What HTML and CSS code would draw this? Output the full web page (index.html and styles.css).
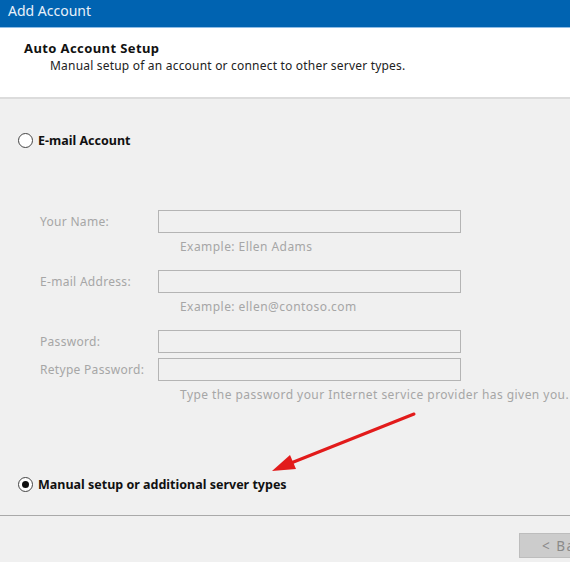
FILE: index.html
```html
<!DOCTYPE html>
<html>
<head>
<meta charset="utf-8">
<link rel="stylesheet" href="styles.css">
</head>
<body>
<div class="window">
  <div class="titlebar">Add Account</div>
  <div class="header">
    <div class="h-title">Auto Account Setup</div>
    <div class="h-sub">Manual setup of an account or connect to other server types.</div>
  </div>
  <div class="content">
    <div class="radio-row first">
      <span class="radio"></span>
      <span class="radio-label">E-mail Account</span>
    </div>
    <div class="form">
      <div class="label">Your Name:</div>
      <div class="field"></div>
      <div class="hint">Example: Ellen Adams</div>
      <div class="label">E-mail Address:</div>
      <div class="field"></div>
      <div class="hint">Example: ellen@contoso.com</div>
      <div class="label pw">Password:</div>
      <div class="field pw"></div>
      <div class="label retype">Retype Password:</div>
      <div class="field retype"></div>
      <div class="hint wide">Type the password your Internet service provider has given you.</div>
    </div>
    <div class="radio-row second">
      <span class="radio checked"></span>
      <span class="radio-label">Manual setup or additional server types</span>
    </div>
  </div>
  <div class="footer">
    <button class="btn">&lt; Back</button>
  </div>
  <svg class="arrow" width="570" height="562" viewBox="0 0 570 562">
    <line x1="414" y1="414" x2="286" y2="465" stroke="#e21b1b" stroke-width="3" stroke-linecap="round"/>
    <polygon points="272,471 290,455 296,469" fill="#e21b1b"/>
  </svg>
</div>
</body>
</html>
```

FILE: styles.css
```css
html, body {
  margin: 0;
  padding: 0;
}
body {
  width: 570px;
  height: 562px;
  overflow: hidden;
  background: #f0f0f0;
  font-family: "Noto Sans", "Open Sans", sans-serif;
  font-size: 12px;
  color: #1a1a1a;
}
.window {
  position: relative;
  width: 570px;
  height: 562px;
  overflow: hidden;
}
.titlebar {
  background: #0063b1;
  color: #e8f1fa;
  font-size: 14px;
  line-height: 21px;
  padding-left: 8px;
  border-bottom: 1px solid #8fbde6;
  box-sizing: border-box;
  height: 28px;
}
.header {
  background: #ffffff;
  border-bottom: 2px solid #dcdcdc;
  padding-left: 24px;
  padding-top: 11px;
  box-sizing: border-box;
  height: 71px;
}
.h-title {
  font-weight: bold;
  font-size: 13px;
  line-height: 18px;
  color: #111;
  letter-spacing: 0.4px;
}
.h-sub {
  padding-left: 26px;
  line-height: 16px;
  margin-top: 1px;
  color: #222;
  letter-spacing: 0.2px;
}
.content {
  height: 417px;
  border-bottom: 1px solid #a9a9a9;
  box-sizing: border-box;
  padding-top: 32px;
}
.radio-row {
  display: flex;
  align-items: center;
  gap: 5px;
  padding-left: 18px;
  height: 18px;
}
.radio-row.second {
  margin-top: 73px;
}
.radio {
  width: 13px;
  height: 13px;
  border: 1.5px solid #444;
  border-radius: 50%;
  background: #fff;
  box-sizing: content-box;
  display: inline-flex;
  align-items: center;
  justify-content: center;
  flex: none;
}
.radio.checked::after {
  content: "";
  width: 7px;
  height: 7px;
  border-radius: 50%;
  background: #111;
}
.radio-label {
  font-weight: bold;
  font-size: 12.5px;
  color: #111;
}
.form {
  display: grid;
  grid-template-columns: 118px 303px;
  margin-left: 40px;
  margin-top: 61px;
  color: #a6a6a6;
}
.label {
  line-height: 23px;
  height: 23px;
  letter-spacing: 0.3px;
}
.field {
  height: 23px;
  border: 1px solid #b4b4b4;
  box-sizing: border-box;
  background: #f0f0f0;
}
.hint {
  grid-column: 2;
  padding-left: 22px;
  line-height: 14px;
  margin-top: 7px;
  margin-bottom: 16px;
  white-space: nowrap;
  letter-spacing: 0.45px;
}
.label.retype, .field.retype {
  margin-top: 5px;
}
.hint.wide {
  margin-top: 7px;
  margin-bottom: 0;
}
.footer {
  position: relative;
  height: 46px;
}
.btn {
  position: absolute;
  left: 519px;
  top: 17px;
  width: 75px;
  height: 25px;
  background: #cccccc;
  border: 1px solid #bdbdbd;
  color: #8a8a8a;
  font-family: "Noto Sans", sans-serif;
  font-size: 13.5px;
  line-height: 20px;
  text-align: left;
  padding: 0 0 0 22px;
  letter-spacing: 1.5px;
  white-space: nowrap;
}
.arrow {
  position: absolute;
  left: 0;
  top: 0;
  pointer-events: none;
}
```
